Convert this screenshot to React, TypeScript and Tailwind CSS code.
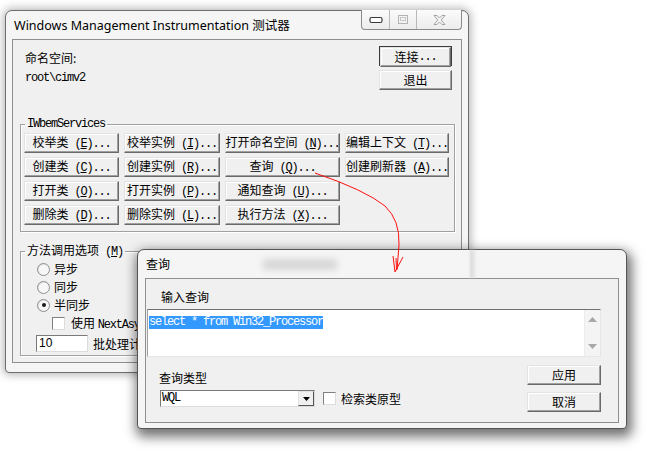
import React from "react";

const MONO = "font-['Liberation_Mono','Noto_Sans_CJK_SC',monospace] tracking-[-1.2px]";
const BTN =
  "flex items-center justify-center h-[20px] bg-[#f0f0f0] border border-t-[#e3e3e3] border-l-[#e3e3e3] border-r-[#696969] border-b-[#696969] shadow-[inset_-1px_-1px_0_#a0a0a0,inset_1px_1px_0_#ffffff] text-[12px] leading-[16px] whitespace-nowrap";

function Lbl({ t, k }: { t: string; k: string }) {
  return (
    <span className="whitespace-nowrap">
      <span>{t}</span>
      <span className={MONO}>
        {" ("}
        <u className="underline-offset-[1px]">{k}</u>
        {")..."}
      </span>
    </span>
  );
}

function Btn({ t, k, w }: { t: string; k: string; w: string }) {
  return (
    <div className={`${BTN} ${w}`}>
      <Lbl t={t} k={k} />
    </div>
  );
}

function Radio({ checked }: { checked?: boolean }) {
  return (
    <div className="w-[13px] h-[13px] rounded-full border border-[#8e8f8f] bg-gradient-to-br from-[#d9d9d9] to-[#ffffff] flex items-center justify-center">
      <div className="w-[9px] h-[9px] rounded-full bg-[#f7f7f7] flex items-center justify-center">
        {checked && <div className="w-[4px] h-[4px] rounded-full bg-[#1a1a1a]" />}
      </div>
    </div>
  );
}

function Check() {
  return <div className="w-[13px] h-[13px] border border-t-[#808080] border-l-[#808080] border-r-[#dcdcdc] border-b-[#dcdcdc] bg-white" />;
}

export default function App() {
  return (
    <div className="relative w-[671px] h-[460px] bg-white overflow-hidden font-['Noto_Sans_CJK_SC',sans-serif] text-[12px] text-black">
      {/* Main window */}
      <div className="absolute left-[5px] top-[10px] w-[464px] h-[363px] rounded-t-[7px] rounded-b-[4px] border border-[#6e6e6e] bg-[#f5f5f5] shadow-[0_0_9px_2px_rgba(0,0,0,0.28)] flex flex-col px-[6px] pb-[9px]">
        <div className="h-[28px] flex items-start shrink-0">
          <div className="pl-[2px] pt-[7px] text-[12.5px] leading-[16px] font-['Noto_Sans','Noto_Sans_CJK_SC',sans-serif] whitespace-nowrap">
            Windows Management Instrumentation 测试器
          </div>
          <div className="ml-auto -mt-[1px] flex h-[20px] border border-t-0 border-[#8a8a8a] rounded-b-[4px] bg-gradient-to-b from-[#fbfbfb] to-[#ececec] overflow-hidden">
            <div className="w-[28px] flex items-center justify-center border-r border-[#b8b8b8]">
              <svg width="14" height="8" viewBox="0 0 14 8">
                <rect x="1" y="1.5" width="12" height="5" rx="1.5" fill="#fff" stroke="#3a3a3a" strokeWidth="1.2" />
              </svg>
            </div>
            <div className="w-[27px] flex items-center justify-center border-r border-[#b8b8b8]">
              <svg width="10" height="9" viewBox="0 0 10 9">
                <rect x="0.5" y="0.5" width="9" height="8" fill="none" stroke="#b4b4b4" />
                <rect x="2.5" y="2.5" width="5" height="3" fill="none" stroke="#c8c8c8" />
              </svg>
            </div>
            <div className="w-[44px] flex items-center justify-center">
              <svg width="13" height="10" viewBox="0 0 13 10">
                <path d="M1 0.5 L4 0.5 L6.5 3 L9 0.5 L12 0.5 L8.2 5 L12 9.5 L9 9.5 L6.5 7 L4 9.5 L1 9.5 L4.8 5 Z" fill="#f4f4f4" stroke="#9a9a9a" strokeWidth="0.9" />
              </svg>
            </div>
          </div>
        </div>
        {/* Client */}
        <div className="flex-1 border border-[#8f8f8f] bg-[#f0f0f0] flex flex-col">
          <div className="flex items-start">
            <div className="pl-[12px] pt-[10px]">
              <div className="leading-[16px]">命名空间:</div>
              <div className={`mt-[4px] leading-[16px] ${MONO}`}>root\cimv2</div>
            </div>
            <div className="ml-auto mr-[9px] mt-[6px] flex flex-col gap-[4px]">
              <div className="w-[73px] h-[20px] border border-[#3c3c3c]">
                <div className={`${BTN} h-[18px] w-full`}>
                  <span>连接</span>
                  <span className={MONO}>...</span>
                </div>
              </div>
              <div className={`${BTN} w-[73px]`}>退出</div>
            </div>
          </div>

          <fieldset className="mt-[27px] ml-[7px] mr-[6px] border border-[#a0a0a0] shadow-[1px_1px_0_#ffffff,inset_1px_1px_0_#ffffff] pl-[3px] pt-[2px] pb-[6px]">
            <legend className={`ml-[1px] px-[2px] leading-[14px] ${MONO}`}>IWbemServices</legend>
            <div className="flex flex-col gap-[4px]">
              <div className="flex gap-[5px]">
                <Btn t="校举类" k="E" w="w-[95px]" />
                <Btn t="校举实例" k="I" w="w-[96px]" />
                <Btn t="打开命名空间" k="N" w="w-[115px]" />
                <Btn t="编辑上下文" k="T" w="w-[104px]" />
              </div>
              <div className="flex gap-[5px]">
                <Btn t="创建类" k="C" w="w-[95px]" />
                <Btn t="创建实例" k="R" w="w-[96px]" />
                <Btn t="查询" k="Q" w="w-[115px]" />
                <Btn t="创建刷新器" k="A" w="w-[104px]" />
              </div>
              <div className="flex gap-[5px]">
                <Btn t="打开类" k="O" w="w-[95px]" />
                <Btn t="打开实例" k="P" w="w-[96px]" />
                <Btn t="通知查询" k="U" w="w-[115px]" />
              </div>
              <div className="flex gap-[5px]">
                <Btn t="删除类" k="D" w="w-[95px]" />
                <Btn t="删除实例" k="L" w="w-[96px]" />
                <Btn t="执行方法" k="X" w="w-[115px]" />
              </div>
            </div>
          </fieldset>

          <fieldset className="mt-[10px] ml-[7px] mr-[6px] border border-[#a0a0a0] shadow-[1px_1px_0_#ffffff,inset_1px_1px_0_#ffffff] pl-[3px] pb-[3px]">
            <legend className="ml-[1px] px-[2px] leading-[16px] whitespace-nowrap">
              方法调用选项<span className={MONO}> (<u>M</u>)</span>
            </legend>
            <div className="flex flex-col">
              <div className="h-[18px] flex items-center ml-[13px] gap-[4px]">
                <Radio />
                <span className="leading-[16px]">异步</span>
              </div>
              <div className="h-[18px] flex items-center ml-[13px] gap-[4px]">
                <Radio />
                <span className="leading-[16px]">同步</span>
              </div>
              <div className="h-[18px] flex items-center ml-[13px] gap-[4px]">
                <Radio checked />
                <span className="leading-[16px]">半同步</span>
              </div>
              <div className="h-[19px] flex items-center ml-[28px] gap-[6px] whitespace-nowrap">
                <Check />
                <span className="leading-[16px] w-[67px] overflow-hidden">
                  使用 <span className={MONO}>NextAsy</span>
                </span>
              </div>
              <div className="mt-[2px] h-[17px] flex items-center ml-[12px] gap-[5px] whitespace-nowrap">
                <div className="w-[52px] h-[17px] border border-t-[#7a7a7a] border-l-[#7a7a7a] border-r-[#dcdcdc] border-b-[#dcdcdc] bg-white pl-[2px] text-[12px] leading-[15px] font-['Liberation_Sans',sans-serif]">
                  10
                </div>
                <span className="leading-[16px] w-[44px] overflow-hidden">批处理计</span>
              </div>
            </div>
          </fieldset>
        </div>
      </div>

      {/* Query dialog */}
      <div className="absolute left-[137px] top-[249px] w-[490px] h-[180px] rounded-t-[7px] rounded-b-[4px] border border-[#555555] bg-[#f5f5f5] shadow-[2px_5px_12px_3px_rgba(0,0,0,0.55)] flex flex-col px-[7px] pb-[5px]">
        <div className="relative h-[28px] shrink-0 pl-[1px] pt-[6px] leading-[16px]">
          <span className="relative z-10">查询</span>
          <div className="absolute left-[118px] top-[9px] w-[74px] h-[11px] bg-[#c4c4c4] blur-[3px] opacity-60" />
          <div className="absolute left-[325px] top-0 w-[7px] h-[28px] bg-gradient-to-r from-[#d6d6d6] to-transparent blur-[1px]" />
        </div>
        <div className="flex-1 border border-[#8f8f8f] bg-[#f0f0f0] flex flex-col">
          <div className="pl-[15px] pt-[10px] leading-[16px]">输入查询</div>
          <div className="mt-[4px] ml-[1px] mr-[17px] h-[48px] border border-t-[#707070] border-l-[#a0a0a0] border-r-[#e6e6e6] border-b-[#e6e6e6] bg-white flex">
            <div className="flex-1 pl-[1px] pt-[1px]">
              <span className={`bg-[#3399ff] text-white leading-[13px] inline-block ${MONO}`}>select * from Win32_Processor</span>
            </div>
            <div className="w-[16px] bg-[#f4f4f4] border-l border-[#ececec] flex flex-col items-center justify-between py-[7px]">
              <svg width="9" height="5" viewBox="0 0 9 5">
                <path d="M0 5 L4.5 0 L9 5 Z" fill="#a8a8a8" />
              </svg>
              <svg width="9" height="5" viewBox="0 0 9 5">
                <path d="M0 0 L4.5 5 L9 0 Z" fill="#a8a8a8" />
              </svg>
            </div>
          </div>
          <div className="flex items-start">
            <div className="flex-1 pl-[13px] pt-[13px]">
              <div className="leading-[16px]">查询类型</div>
              <div className="mt-[4px] ml-[1px] flex items-center">
                <div className="w-[155px] h-[17px] border border-t-[#7a7a7a] border-l-[#7a7a7a] border-r-[#dcdcdc] border-b-[#dcdcdc] bg-white flex">
                  <div className={`flex-1 pl-[1px] leading-[15px] ${MONO}`}>WQL</div>
                  <div className="w-[16px] h-[15px] bg-[#f0f0f0] border border-t-[#e3e3e3] border-l-[#e3e3e3] border-r-[#555555] border-b-[#555555] flex items-center justify-center">
                    <svg width="7" height="4" viewBox="0 0 7 4">
                      <path d="M0 0 L7 0 L3.5 4 Z" fill="#000" />
                    </svg>
                  </div>
                </div>
                <div className="ml-[8px]">
                  <Check />
                </div>
                <span className="ml-[5px] leading-[16px]">检索类原型</span>
              </div>
            </div>
            <div className="mr-[17px] mt-[8px] flex flex-col gap-[7px]">
              <div className={`${BTN} w-[74px]`}>应用</div>
              <div className={`${BTN} w-[74px]`}>取消</div>
            </div>
          </div>
        </div>
      </div>

      {/* Red arrow annotation */}
      <svg className="absolute left-0 top-0 pointer-events-none" width="671" height="460" viewBox="0 0 671 460">
        <path d="M315 173 Q365 190 385 206 Q400 220 399 245 L397 270" fill="none" stroke="#ff1010" strokeWidth="1" />
        <path d="M393 256 L395 272 L403 257" fill="none" stroke="#ff1010" strokeWidth="1" />
        <path d="M396 258 L396.5 270" fill="none" stroke="#ff1010" strokeWidth="1" />
      </svg>
    </div>
  );
}
